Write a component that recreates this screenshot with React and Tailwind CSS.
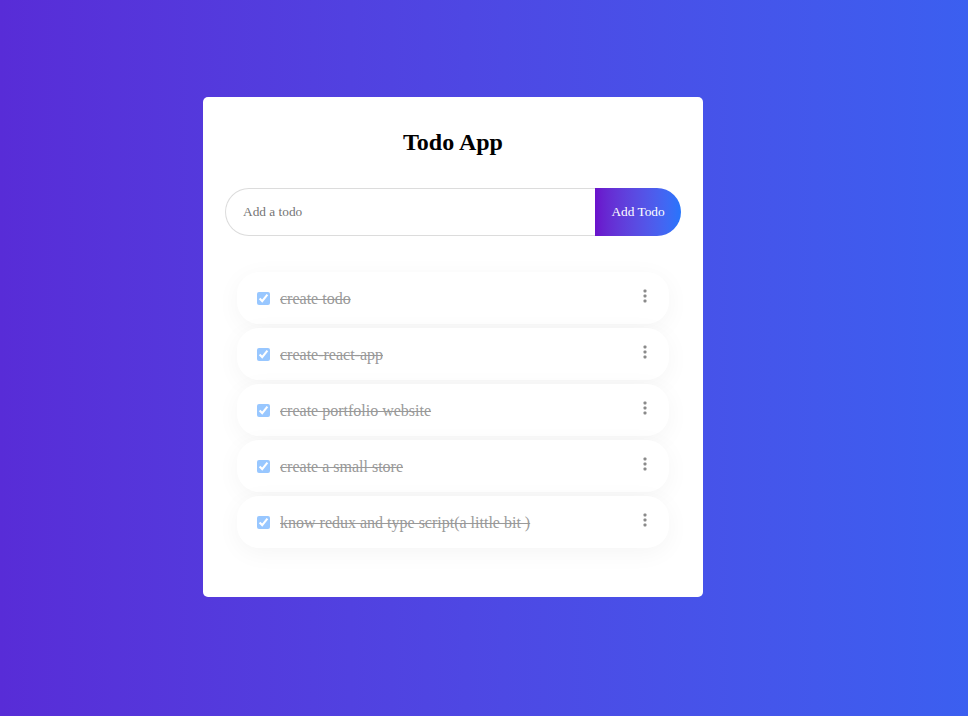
import React from "react";

function Kebab() {
    return (
        <svg width="4" height="14" viewBox="0 0 4 14" className="text-[#8a8a8a]">
            <rect x="0.5" y="0.5" width="3" height="3" rx="1" fill="currentColor" />
            <rect x="0.5" y="5.5" width="3" height="3" rx="1" fill="currentColor" />
            <rect x="0.5" y="10.5" width="3" height="3" rx="1" fill="currentColor" />
        </svg>
    );
}

export default function App() {
    const todos = [
        "create todo",
        "create-react-app",
        "create portfolio website",
        "create a small store",
        "know redux and type script(a little bit )",
    ];

    return (
        <div
            className="min-h-[716px] w-full bg-gradient-to-r from-[#582cd7] to-[#3b5ff0] pt-[97px] pl-[203px]"
            style={{ fontFamily: '"Liberation Serif", "Times New Roman", serif' }}
        >
            <div className="w-[500px] h-[500px] bg-white rounded-[5px] px-[22px] pt-[31px]">
                <h1 className="text-center text-[24px] leading-[28px] font-bold text-black">
                    Todo App
                </h1>

                <form className="flex mt-[32px] h-12" onSubmit={(e) => e.preventDefault()}>
                    <input
                        type="text"
                        placeholder="Add a todo"
                        className="w-[370px] h-12 border border-[#dcdcdc] border-r-0 rounded-l-full pl-[17px] text-[13.333px] outline-none placeholder:text-[#757575]"
                    />
                    <button
                        type="submit"
                        className="w-[86px] h-12 rounded-r-full bg-gradient-to-r from-[#6a11cb] to-[#2575fc] text-white text-[13.333px]"
                    >
                        Add Todo
                    </button>
                </form>

                <ul className="mt-[36px] mx-[12px] flex flex-col gap-[4px]">
                    {todos.map((todo, i) => (
                        <li
                            key={i}
                            className="h-[52px] flex items-center pl-[20px] pr-[22px] bg-white rounded-[22px] shadow-[0_5px_24px_rgba(0,0,0,0.045)]"
                        >
                            <input
                                type="checkbox"
                                defaultChecked
                                className="w-[13px] h-[13px] m-0 opacity-40 accent-[#0075ff]"
                            />
                            <span className="ml-[10px] mt-[2px] text-[16px] leading-[18px] text-[#999999] line-through">
                                {todo}
                            </span>
                            <span className="ml-auto -mt-[4px] flex">
                                <Kebab />
                            </span>
                        </li>
                    ))}
                </ul>
            </div>
        </div>
    );
}
